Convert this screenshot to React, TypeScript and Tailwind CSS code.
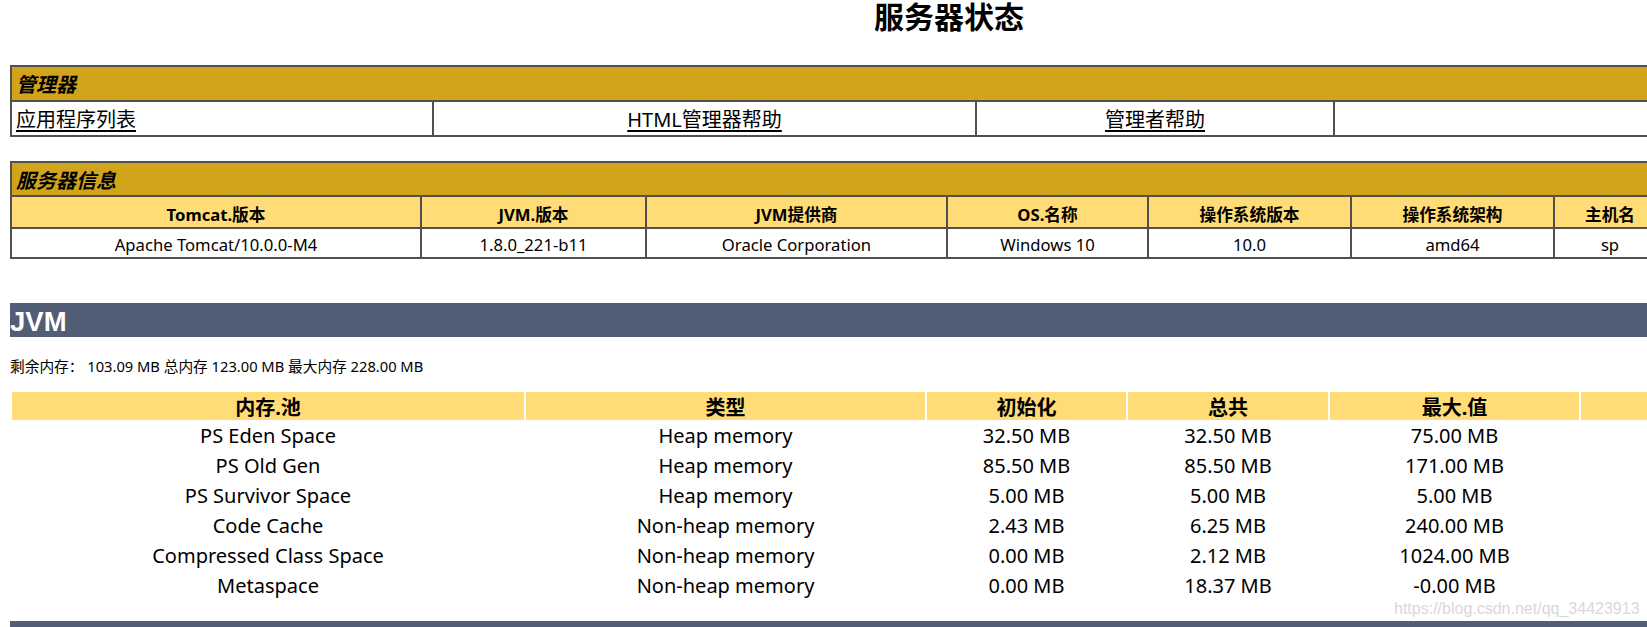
import React from 'react';

const managerLinks = [
  { label: '应用程序列表', width: 'w-[422px]', align: 'justify-start pl-[4px]' },
  { label: 'HTML管理器帮助', width: 'w-[543px]', align: 'justify-center' },
  { label: '管理者帮助', width: 'w-[358px]', align: 'justify-center' },
  { label: '', width: 'w-[553px]', align: 'justify-end' },
];

const serverInfo = [
  { title: 'Tomcat.版本', value: 'Apache Tomcat/10.0.0-M4', width: 'w-[410px]' },
  { title: 'JVM.版本', value: '1.8.0_221-b11', width: 'w-[225px]' },
  { title: 'JVM提供商', value: 'Oracle Corporation', width: 'w-[301px]' },
  { title: 'OS.名称', value: 'Windows 10', width: 'w-[201px]' },
  { title: '操作系统版本', value: '10.0', width: 'w-[203px]' },
  { title: '操作系统架构', value: 'amd64', width: 'w-[203px]' },
  { title: '主机名', value: 'sp', width: 'w-[112px]' },
  { title: 'IP地址', value: '', width: 'w-[221px]' },
];

const memoryCols = [
  { title: '内存.池', width: 'w-[512px]' },
  { title: '类型', width: 'w-[399px]' },
  { title: '初始化', width: 'w-[199px]' },
  { title: '总共', width: 'w-[200px]' },
  { title: '最大.值', width: 'w-[249px]' },
  { title: '已用', width: 'w-[250px]' },
];

const memoryPools = [
  ['PS Eden Space', 'Heap memory', '32.50 MB', '32.50 MB', '75.00 MB', ''],
  ['PS Old Gen', 'Heap memory', '85.50 MB', '85.50 MB', '171.00 MB', ''],
  ['PS Survivor Space', 'Heap memory', '5.00 MB', '5.00 MB', '5.00 MB', ''],
  ['Code Cache', 'Non-heap memory', '2.43 MB', '6.25 MB', '240.00 MB', ''],
  ['Compressed Class Space', 'Non-heap memory', '0.00 MB', '2.12 MB', '1024.00 MB', ''],
  ['Metaspace', 'Non-heap memory', '0.00 MB', '18.37 MB', '-0.00 MB', ''],
];

const cell = 'border border-[#505050] flex items-center shrink-0';

export default function App() {
  return (
    <div className="relative w-[1647px] h-[627px] overflow-hidden bg-white text-black font-['Noto_Sans','Noto_Sans_CJK_SC',sans-serif]">
      <div className="w-[1878px] ml-[10px]">
        <h1 className="h-[34px] leading-[34px] text-center text-[30px] font-bold">服务器状态</h1>

        {/* 管理器 */}
        <div className="mt-[31px] border border-[#505050]">
          <div className={`${cell} h-[35px] bg-[#D2A41C] pl-[4px] pt-[3px] text-[20px] font-bold italic`}>管理器</div>
          <div className="flex">
            {managerLinks.map((link, i) => (
              <div key={i} className={`${cell} ${link.width} ${link.align} h-[35px] pt-[3px] text-[20px]`}>
                {link.label && <a href="#" className="underline underline-offset-[3px]">{link.label}</a>}
              </div>
            ))}
          </div>
        </div>

        {/* 服务器信息 */}
        <div className="mt-[24px] border border-[#505050]">
          <div className={`${cell} h-[34px] bg-[#D2A41C] pl-[4px] pt-[4px] text-[20px] font-bold italic`}>服务器信息</div>
          <div className="flex">
            {serverInfo.map((col, i) => (
              <div key={i} className={`${cell} ${col.width} h-[32px] justify-center pt-[4px] bg-[#FFDC75] text-[16.67px] font-bold whitespace-nowrap`}>
                {col.title}
              </div>
            ))}
          </div>
          <div className="flex">
            {serverInfo.map((col, i) => (
              <div key={i} className={`${cell} ${col.width} h-[30px] justify-center pt-[3px] text-[16.67px] whitespace-nowrap`}>
                {col.value}
              </div>
            ))}
          </div>
        </div>

        {/* JVM */}
        <h2 className="mt-[44px] h-[34px] pt-[4px] leading-[30px] bg-[#525D76] text-white text-[27.5px] font-bold font-['Liberation_Sans',Arial,sans-serif]">
          JVM
        </h2>
        <p className="mt-[19px] h-[20px] leading-[20px] text-[14.7px] whitespace-nowrap">
          剩余内存：&nbsp;103.09 MB 总内存 123.00 MB 最大内存 228.00 MB
        </p>

        <div className="mt-[14px] p-[2px] flex flex-col gap-[2px] text-[20px]">
          <div className="flex gap-[2px]">
            {memoryCols.map((col, i) => (
              <div key={i} className={`${col.width} shrink-0 h-[28px] leading-[28px] pt-[2px] bg-[#FFDC75] text-center font-bold`}>
                {col.title}
              </div>
            ))}
          </div>
          {memoryPools.map((row, r) => (
            <div key={r} className="flex gap-[2px]">
              {row.map((value, i) => (
                <div key={i} className={`${memoryCols[i].width} shrink-0 h-[28px] leading-[28px] text-center whitespace-nowrap`}>
                  {value}
                </div>
              ))}
            </div>
          ))}
        </div>

        <div className="mt-[19px] h-[34px] bg-[#525D76]" />
      </div>

      <span className="absolute left-[1394px] top-[599px] text-[16px] leading-[20px] text-[#d8d8d8] font-['Liberation_Sans',Arial,sans-serif] whitespace-nowrap">
        https://blog.csdn.net/qq_34423913
      </span>
    </div>
  );
}
